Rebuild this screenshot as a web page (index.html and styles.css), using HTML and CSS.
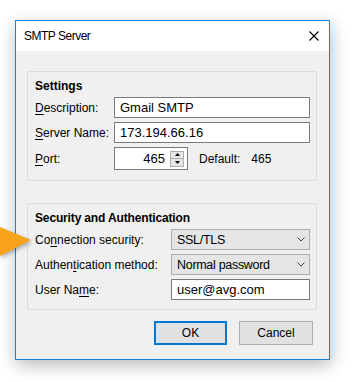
FILE: index.html
```html
<!DOCTYPE html>
<html>
<head>
<meta charset="utf-8">
<link rel="stylesheet" href="styles.css">
</head>
<body>
<div class="page">
  <div class="window">
    <div class="titlebar">
      <span class="title">SMTP Server</span>
      <svg class="close" width="10" height="10" viewBox="0 0 10 10"><path d="M0.5 0.5 L9.5 9.5 M9.5 0.5 L0.5 9.5" stroke="#000" stroke-width="1.1" fill="none"/></svg>
    </div>
    <div class="body">
      <div class="group settings">
        <div class="legend">Settings</div>
        <div class="grid grid-settings">
          <div class="label"><u>D</u>escription:</div>
          <div class="input">Gmail SMTP</div>
          <div class="label"><u>S</u>erver Name:</div>
          <div class="input">173.194.66.16</div>
          <div class="label"><u>P</u>ort:</div>
          <div class="port-row">
            <div class="input port">
              <span class="port-value">465</span>
              <span class="spinner">
                <span class="spin up"><svg width="5" height="3" viewBox="0 0 5 3"><path d="M2.5 0 L5 3 L0 3 Z" fill="#000"/></svg></span>
                <span class="spin down"><svg width="5" height="3" viewBox="0 0 5 3"><path d="M0 0 L5 0 L2.5 3 Z" fill="#000"/></svg></span>
              </span>
            </div>
            <span class="default-label">Default:</span>
            <span class="default-value">465</span>
          </div>
        </div>
      </div>
      <div class="group security">
        <div class="legend">Security and Authentication</div>
        <div class="grid grid-security">
          <div class="label">Co<u>n</u>nection security:</div>
          <div class="select"><span class="select-text">SSL/TLS</span><svg class="chev" width="8" height="5" viewBox="0 0 8 5"><path d="M0.5 0.5 L4 4 L7.5 0.5" stroke="#444" stroke-width="1" fill="none"/></svg></div>
          <div class="label">Authen<u>t</u>ication method:</div>
          <div class="select"><span class="select-text">Normal password</span><svg class="chev" width="8" height="5" viewBox="0 0 8 5"><path d="M0.5 0.5 L4 4 L7.5 0.5" stroke="#444" stroke-width="1" fill="none"/></svg></div>
          <div class="label">User Na<u>m</u>e:</div>
          <div class="input">user@avg.com</div>
        </div>
      </div>
      <div class="buttons">
        <div class="btn primary">OK</div>
        <div class="btn">Cancel</div>
      </div>
    </div>
  </div>
  <svg class="pointer" width="36" height="40" viewBox="0 0 36 40"><path d="M0 2 L31 15 L0 31 Z" fill="#f9a31c"/></svg>
</div>
</body>
</html>
```
FILE: styles.css
```css
html, body {
  margin: 0;
  padding: 0;
  background: #fff;
}
body {
  font-family: "Liberation Sans", Arial, sans-serif;
  font-size: 12px;
  color: #000;
}
.page {
  position: relative;
  width: 353px;
  height: 382px;
  box-sizing: border-box;
  padding: 20px 0 0 15px;
  overflow: hidden;
}
.window {
  width: 315px;
  height: 340px;
  box-sizing: border-box;
  border: 1px solid #1a80d6;
  background: #f0f0f0;
  box-shadow: 1px 5px 16px rgba(0, 0, 0, 0.28);
  display: flex;
  flex-direction: column;
}
.titlebar {
  height: 30px;
  flex: none;
  background: #fff;
  display: flex;
  align-items: center;
  justify-content: space-between;
  padding: 0 10px 1px 8px;
  box-sizing: border-box;
}
.title {
  font-size: 12px;
  letter-spacing: -0.5px;
}
.close {
  display: block;
}
.body {
  flex: 1;
  padding: 20px 12px 14px 11px;
  display: flex;
  flex-direction: column;
}
.group {
  border: 1px solid #dcdcdc;
  padding: 6px 6px 10px 7px;
}
.group.security {
  margin-top: 22px;
  padding-bottom: 9px;
}
.legend {
  font-weight: bold;
  line-height: 16px;
  height: 16px;
  margin-bottom: 3px;
}
.security .legend {
  letter-spacing: -0.15px;
}
.grid {
  display: grid;
  row-gap: 4px;
  align-items: center;
}
.grid-settings {
  grid-template-columns: 79px 196px;
}
.grid-security {
  grid-template-columns: 136px 139px;
}
.label {
  line-height: 16px;
  white-space: nowrap;
}
.label u {
  text-decoration-thickness: 1px;
  text-underline-offset: 2px;
}
.input {
  height: 21px;
  box-sizing: border-box;
  border: 1px solid #7a7a7a;
  background: #fff;
  padding: 0 5px;
  font-size: 13px;
  line-height: 19px;
  white-space: nowrap;
}
.port-row {
  display: flex;
  align-items: center;
}
.input.port {
  width: 74px;
  height: 23px;
  display: flex;
  align-items: center;
  padding: 0 3px 0 5px;
}
.port-value {
  flex: 1;
  text-align: right;
  margin-right: 5px;
}
.spinner {
  width: 14px;
  height: 16px;
  box-sizing: border-box;
  border: 1px solid #adadad;
  background: #e6e6e6;
  display: flex;
  flex-direction: column;
}
.spin {
  flex: 1;
  display: flex;
  align-items: center;
  justify-content: center;
}
.spin svg {
  display: block;
}
.spin.up {
  border-bottom: 1px solid #adadad;
}
.default-label {
  margin-left: 11px;
}
.default-value {
  margin-left: 11px;
}
.select {
  height: 21px;
  box-sizing: border-box;
  border: 1px solid #adadad;
  background: #e5e5e5;
  padding: 0 4px 0 5px;
  display: flex;
  align-items: center;
  justify-content: space-between;
  font-size: 12.5px;
  letter-spacing: -0.3px;
  white-space: nowrap;
}
.chev {
  display: block;
}
.buttons {
  margin-top: 11px;
  display: flex;
  justify-content: flex-end;
  gap: 12px;
  padding-right: 4px;
}
.btn {
  height: 24px;
  width: 74px;
  box-sizing: border-box;
  border: 1px solid #adadad;
  background: #e1e1e1;
  display: flex;
  align-items: center;
  justify-content: center;
  font-size: 12px;
}
.btn.primary {
  width: 73px;
  border: 2px solid #0078d7;
}
.pointer {
  position: absolute;
  left: 0;
  top: 225px;
  filter: drop-shadow(1px 2px 2px rgba(0, 0, 0, 0.3));
}
```
